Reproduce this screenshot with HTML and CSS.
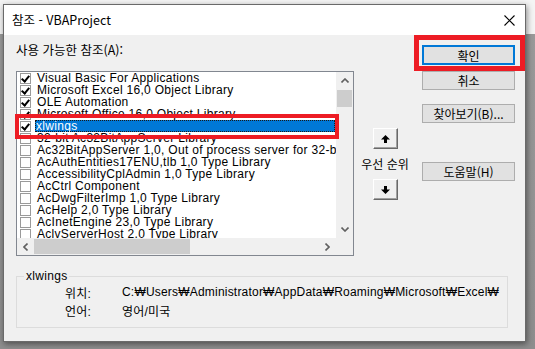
FILE: index.html
```html
<!DOCTYPE html>
<html lang="ko">
<head>
    <meta charset="UTF-8">
    <title>참조 - VBAProject</title>
    <link rel="stylesheet" href="styles.css">
</head>
<body>
    <div class="dialog">
        <div class="titlebar">
            <span class="title">참조 - VBAProject</span>
            <svg class="close" width="11" height="11" viewBox="0 0 11 11">
                <path d="M0.5 0.5 L10.5 10.5 M10.5 0.5 L0.5 10.5" stroke="#000" stroke-width="1.1" fill="none"/>
            </svg>
        </div>

        <div class="main">
            <div class="left-col">
                <div class="label">사용 가능한 참조(A):</div>
                <div class="listbox">
                    <div class="list-area">
                        <div class="rows">
                            <div class="row"><span class="check on"></span><span class="name">Visual Basic For Applications</span></div>
                            <div class="row"><span class="check on"></span><span class="name">Microsoft Excel 16,0 Object Library</span></div>
                            <div class="row"><span class="check on"></span><span class="name">OLE Automation</span></div>
                            <div class="row"><span class="check on"></span><span class="name">Microsoft Office 16,0 Object Library</span></div>
                            <div class="row selected"><span class="check on"></span><span class="name">xlwings</span></div>
                            <div class="row"><span class="check"></span><span class="name">32-bit Ac32BitAppServer Library</span></div>
                            <div class="row"><span class="check"></span><span class="name">Ac32BitAppServer 1,0, Out of process server for 32-bit</span></div>
                            <div class="row"><span class="check"></span><span class="name">AcAuthEntities17ENU,tlb 1,0 Type Library</span></div>
                            <div class="row"><span class="check"></span><span class="name">AccessibilityCplAdmin 1,0 Type Library</span></div>
                            <div class="row"><span class="check"></span><span class="name">AcCtrl Component</span></div>
                            <div class="row"><span class="check"></span><span class="name">AcDwgFilterImp 1,0 Type Library</span></div>
                            <div class="row"><span class="check"></span><span class="name">AcHelp 2,0 Type Library</span></div>
                            <div class="row"><span class="check"></span><span class="name">AcInetEngine 23,0 Type Library</span></div>
                            <div class="row"><span class="check"></span><span class="name">AclvServerHost 2,0 Type Library</span></div>
                        </div>
                        <div class="vscroll">
                            <div class="sb-btn">
                                <svg width="8" height="5" viewBox="0 0 8 5"><path d="M0.5 4.5 L4 1 L7.5 4.5" stroke="#606060" stroke-width="1.6" fill="none"/></svg>
                            </div>
                            <div class="vthumb"></div>
                            <div class="vtrack"></div>
                            <div class="sb-btn">
                                <svg width="8" height="5" viewBox="0 0 8 5"><path d="M0.5 0.5 L4 4 L7.5 0.5" stroke="#606060" stroke-width="1.6" fill="none"/></svg>
                            </div>
                        </div>
                    </div>
                    <div class="hscroll">
                        <div class="sb-btn">
                            <svg width="5" height="8" viewBox="0 0 5 8"><path d="M4.5 0.5 L1 4 L4.5 7.5" stroke="#606060" stroke-width="1.6" fill="none"/></svg>
                        </div>
                        <div class="hthumb"></div>
                        <div class="htrack"></div>
                        <div class="sb-btn">
                            <svg width="5" height="8" viewBox="0 0 5 8"><path d="M0.5 0.5 L4 4 L0.5 7.5" stroke="#606060" stroke-width="1.6" fill="none"/></svg>
                        </div>
                        <div class="corner"></div>
                    </div>
                    <div class="mark mark-row"></div>
                </div>
            </div>

            <div class="mid-col">
                <div class="arrow-btn">
                    <svg width="9" height="8" viewBox="0 0 9 8"><polygon points="4.5,0 9,4.5 6,4.5 6,8 3,8 3,4.5 0,4.5" fill="#000"/></svg>
                </div>
                <div class="priority">우선 순위</div>
                <div class="arrow-btn">
                    <svg width="9" height="8" viewBox="0 0 9 8"><polygon points="3,0 6,0 6,3.5 9,3.5 4.5,8 0,3.5 3,3.5" fill="#000"/></svg>
                </div>
            </div>

            <div class="right-col">
                <div class="ok-wrap">
                    <button class="btn default">확인</button>
                    <div class="mark mark-ok"></div>
                </div>
                <button class="btn cancel">취소</button>
                <button class="btn browse">찾아보기(B)...</button>
                <button class="btn help">도움말(H)</button>
            </div>
        </div>

        <fieldset class="info">
            <legend>xlwings</legend>
            <div class="info-grid">
                <span>위치:</span><span>C:₩Users₩Administrator₩AppData₩Roaming₩Microsoft₩Excel₩</span>
                <span>언어:</span><span>영어/미국</span>
            </div>
        </fieldset>
    </div>
</body>
</html>
```

FILE: styles.css
```css
body {
    margin: 0;
    width: 535px;
    height: 349px;
    overflow: hidden;
    background: linear-gradient(#f4f4f4 0, #f4f4f4 34px, #9a9a9a 34px, #8e8e8e 100%);
    font-family: "Noto Sans CJK KR", "Liberation Sans", sans-serif;
    font-size: 12px;
    color: #000;
}
.dialog {
    margin: 4px 0 0 3px;
    width: 521px;
    height: 336px;
    border: 1px solid #6a6a6a;
    background-color: #f0f0f0;
    box-shadow: 1px 2px 6px rgba(0, 0, 0, 0.45);
}
.titlebar {
    height: 30px;
    background-color: #fff;
    display: flex;
    align-items: center;
    justify-content: space-between;
    padding: 0 10px 0 8px;
}
.title {
    font-size: 12.5px;
    line-height: 16px;
}
.main {
    display: flex;
    padding-left: 12px;
}
.left-col {
    width: 338px;
}
.label {
    margin-top: 7px;
    height: 16px;
    line-height: 16px;
    font-size: 12.5px;
    margin-bottom: 13px;
}
.listbox {
    position: relative;
    width: 336px;
    height: 183px;
    border: 1px solid #828790;
    background-color: #fff;
}
.list-area {
    display: flex;
    height: 166px;
}
.rows {
    width: 319px;
    overflow: hidden;
    font-family: "Liberation Sans", "Noto Sans CJK KR", sans-serif;
    letter-spacing: 0.3px;
}
.row {
    display: flex;
    align-items: center;
    height: 12px;
    line-height: 12px;
    white-space: nowrap;
    padding-left: 3px;
}
.check {
    flex: none;
    width: 9px;
    height: 9px;
    border: 1px solid #9a9a9a;
    background-color: #fff;
    margin-right: 5px;
    position: relative;
}
.check.on::after {
    content: "";
    position: absolute;
    left: 2px;
    top: 0px;
    width: 3px;
    height: 6px;
    border: solid #000;
    border-width: 0 2px 2px 0;
    transform: rotate(40deg);
}
.name {
    padding: 0 1px;
    height: 12px;
}
.row.selected .name {
    flex: 1;
    margin-left: -1px;
    margin-right: 1px;
    background-color: #0078d7;
    color: #fff;
    outline: 1px dotted #1a1a1a;
    outline-offset: -1px;
}
.vscroll {
    width: 17px;
    background-color: #f0f0f0;
    display: flex;
    flex-direction: column;
}
.sb-btn {
    flex: none;
    width: 17px;
    height: 17px;
    display: flex;
    align-items: center;
    justify-content: center;
}
.vthumb {
    height: 17px;
    margin: 1px 1px 0 1px;
    background-color: #cdcdcd;
}
.vtrack {
    flex: 1;
}
.hscroll {
    display: flex;
    height: 17px;
    background-color: #f0f0f0;
}
.hthumb {
    width: 156px;
    margin: 1px 0;
    background-color: #cdcdcd;
}
.htrack {
    flex: 1;
}
.corner {
    width: 17px;
    background-color: #f0f0f0;
}
.mid-col {
    width: 62px;
    display: flex;
    flex-direction: column;
    align-items: center;
    padding-top: 93px;
}
.arrow-btn {
    width: 23px;
    height: 19px;
    display: flex;
    align-items: center;
    justify-content: center;
    background-color: #f0f0f0;
    border: 1px solid;
    border-color: #fff #696969 #696969 #fff;
    box-shadow: inset -1px -1px 0 #a0a0a0;
}
.priority {
    height: 30px;
    line-height: 30px;
    white-space: nowrap;
}
.right-col {
    margin-left: 6px;
    width: 93px;
    padding-top: 10px;
    display: flex;
    flex-direction: column;
}
.btn {
    width: 93px;
    height: 19px;
    padding: 0;
    font-family: "Noto Sans CJK KR", "Liberation Sans", sans-serif;
    font-size: 12px;
    line-height: 15px;
    color: #000;
    background-color: #e1e1e1;
    border: 1px solid #adadad;
}
.ok-wrap {
    position: relative;
}
.btn.default {
    height: 20px;
    border: 2px solid #0078d7;
}
.btn.cancel {
    margin-top: 6px;
}
.btn.browse {
    margin-top: 14px;
}
.btn.help {
    margin-top: 39px;
}
.mark {
    position: absolute;
    border: 5px solid #ed1c24;
}
.mark-ok {
    left: -8px;
    top: -10px;
    width: 101px;
    height: 26px;
}
.mark-row {
    left: -2px;
    top: 42px;
    width: 316px;
    height: 17px;
    border-width: 4px;
}
.info {
    margin: 13px 0 0 12px;
    padding: 0;
    width: 490px;
    height: 57px;
    border: 1px solid #dcdcdc;
}
.info legend {
    margin-left: 7px;
    padding: 0 2px;
    line-height: 14px;
    font-family: "Liberation Sans", "Noto Sans CJK KR", sans-serif;
    letter-spacing: 0.3px;
}
.info-grid {
    display: grid;
    grid-template-columns: 57px auto;
    grid-auto-rows: 18.5px;
    align-items: center;
    padding: 0 0 0 48px;
    font-family: "Liberation Sans", "Noto Sans CJK KR", sans-serif;
    letter-spacing: 0.2px;
    white-space: nowrap;
}
```
